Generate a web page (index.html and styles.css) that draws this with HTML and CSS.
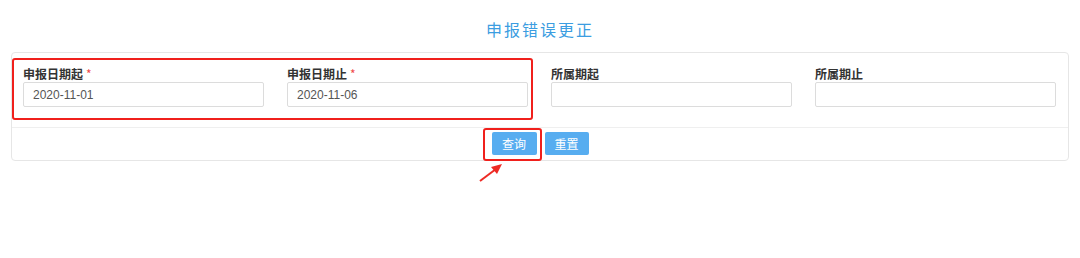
FILE: index.html
```html
<!DOCTYPE html>
<html lang="zh-CN">
<head>
  <meta charset="UTF-8" />
  <title>申报错误更正</title>
  <link rel="stylesheet" href="styles.css">
</head>
<body>

<h2 class="page-title">申报错误更正</h2>

<div class="panel">
  <form class="search-form">
    <div class="field">
      <label>申报日期起<span class="req">*</span></label>
      <input type="text" value="2020-11-01" />
    </div>
    <div class="field">
      <label>申报日期止<span class="req">*</span></label>
      <input type="text" value="2020-11-06" />
    </div>
    <div class="field">
      <label>所属期起</label>
      <input type="text" />
    </div>
    <div class="field">
      <label>所属期止</label>
      <input type="text" />
    </div>
  </form>
  <div class="actions">
    <button type="button" class="btn">查询</button>
    <button type="button" class="btn btn-reset">重置</button>
  </div>
</div>

<!-- annotations drawn over the screenshot -->
<div class="mark mark-dates"></div>
<div class="mark mark-query"></div>
<svg class="arrow" width="40" height="30" viewBox="0 0 40 30">
  <line x1="2" y1="25" x2="18" y2="13" stroke="#ee2a24" stroke-width="2" />
  <polygon points="24,8 13,11 19,18" fill="#ee2a24" />
</svg>

</body>
</html>
```

FILE: styles.css
```css
html, body {
  height: 258px;
}
body {
  margin: 0;
  padding: 0 11px;
  font-family: "Liberation Sans", Arial, "Noto Sans CJK SC", sans-serif;
  font-size: 12px;
  color: #333;
  background: #fff;
  position: relative;
}
.page-title {
  margin: 0;
  height: 52px;
  line-height: 58px;
  text-align: center;
  font-size: 16px;
  font-weight: normal;
  letter-spacing: 2px;
  color: #3b9de1;
  font-family: "Noto Sans CJK SC", sans-serif;
}
.panel {
  border: 1px solid #e6e6e6;
  border-radius: 4px;
}
.search-form {
  display: grid;
  grid-template-columns: repeat(4, 1fr);
  column-gap: 23px;
  padding: 13px 12px 20px 11px;
}
.field label {
  display: block;
  height: 16px;
  line-height: 16px;
  font-weight: bold;
  font-family: "Noto Sans CJK SC", sans-serif;
  color: #333;
}
.req {
  color: #f04a4a;
  font-weight: normal;
  margin-left: 3px;
}
.field input {
  display: block;
  box-sizing: border-box;
  width: 100%;
  height: 25px;
  margin-top: 0;
  padding: 0 9px;
  border: 1px solid #dcdcdc;
  border-radius: 2px;
  font-family: "Liberation Sans", Arial, sans-serif;
  font-size: 12px;
  color: #555;
}
.actions {
  border-top: 1px solid #efefef;
  display: flex;
  justify-content: center;
  gap: 8px;
  padding: 4px 0 5px 0;
}
.btn {
  width: 45px;
  height: 23px;
  padding: 0;
  border: none;
  border-radius: 2px;
  background: #57adf0;
  color: #fff;
  font-family: "Noto Sans CJK SC", sans-serif;
  font-size: 12px;
}
.btn-reset {
  width: 44px;
}
.mark {
  position: absolute;
  border: 2px solid #f0201c;
  border-radius: 3px;
  box-sizing: border-box;
}
.mark-dates {
  left: 12px;
  top: 58px;
  width: 521px;
  height: 62px;
}
.mark-query {
  left: 483px;
  top: 128px;
  width: 59px;
  height: 33px;
}
.arrow {
  position: absolute;
  left: 478px;
  top: 156px;
}
```
